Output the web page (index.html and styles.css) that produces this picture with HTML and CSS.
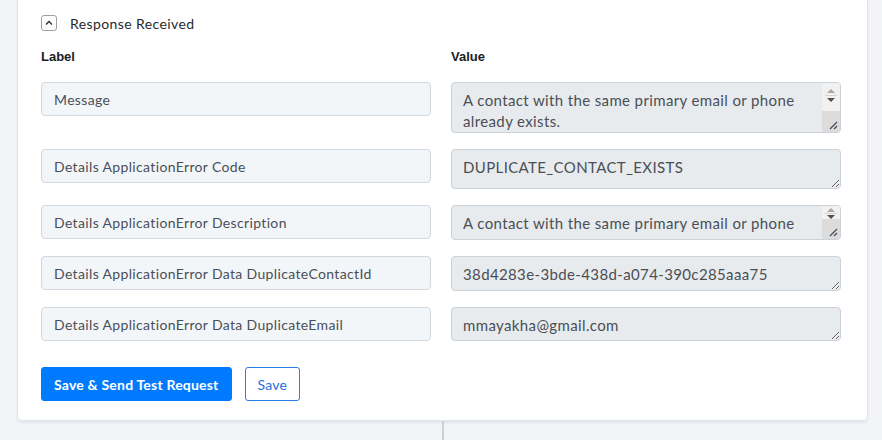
FILE: index.html
```html
<!DOCTYPE html>
<html lang="en">
<head>
    <meta charset="UTF-8">
    <meta name="viewport" content="width=device-width, initial-scale=1.0">
    <title>Response Received</title>
    <link rel="stylesheet" href="styles.css">
</head>
<body>

<!-- Carte de la réponse -->
<div class="card">
    <div class="card-head">
        <button class="toggle" type="button" aria-label="Collapse">
            <svg width="8" height="6" viewBox="0 0 8 6"><path d="M1 4.5 L4 1.5 L7 4.5" fill="none" stroke="#2b2f33" stroke-width="1.4"/></svg>
        </button>
        <span class="card-title">Response Received</span>
    </div>

    <div class="grid">
        <div class="col-title">Label</div>
        <div class="col-title">Value</div>

        <input class="field" type="text" value="Message" readonly>
        <div class="value-wrap">
            <textarea class="value scrolled h51" readonly>A contact with the same primary email or phone already exists.</textarea>
            <div class="scrollbar">
                <div class="track tall">
                    <span class="arrow up"></span>
                    <span class="sep"></span>
                    <span class="arrow down"></span>
                </div>
                <div class="corner">
                    <svg width="10" height="10" viewBox="0 0 10 10"><path d="M2 9 L9 2 M6 9 L9 6" stroke="#4b4f54" stroke-width="1.3"/></svg>
                </div>
            </div>
        </div>

        <input class="field" type="text" value="Details ApplicationError Code" readonly>
        <textarea class="value h40" readonly>DUPLICATE_CONTACT_EXISTS</textarea>

        <input class="field" type="text" value="Details ApplicationError Description" readonly>
        <div class="value-wrap">
            <textarea class="value scrolled h35" readonly>A contact with the same primary email or phone already exists.</textarea>
            <div class="scrollbar">
                <div class="track short">
                    <span class="arrow up"></span>
                    <span class="sep"></span>
                    <span class="arrow down"></span>
                </div>
                <div class="corner">
                    <svg width="10" height="10" viewBox="0 0 10 10"><path d="M2 9 L9 2 M6 9 L9 6" stroke="#4b4f54" stroke-width="1.3"/></svg>
                </div>
            </div>
        </div>

        <input class="field" type="text" value="Details ApplicationError Data DuplicateContactId" readonly>
        <textarea class="value h35" readonly>38d4283e-3bde-438d-a074-390c285aaa75</textarea>

        <input class="field" type="text" value="Details ApplicationError Data DuplicateEmail" readonly>
        <textarea class="value h34" readonly>mmayakha@gmail.com</textarea>
    </div>

    <div class="actions">
        <button class="btn btn-primary" type="button">Save &amp; Send Test Request</button>
        <button class="btn btn-outline" type="button">Save</button>
    </div>
</div>

<!-- Connecteur vers l'étape suivante -->
<div class="connector"></div>

</body>
</html>
```

FILE: styles.css
```css
body {
    margin: 0;
    padding: 0;
    background: #f2f4f7;
    font-family: 'Lato', 'Open Sans', sans-serif;
    color: #3d4248;
    overflow: hidden;
}

.card {
    width: 800px;
    margin-left: 17px;
    padding: 15px 26px 19px 23px;
    background: #ffffff;
    border: 1px solid #dfe4ee;
    border-top: none;
    border-radius: 0 0 5px 5px;
    box-shadow: 0 2px 3px rgba(40, 60, 100, 0.08);
}

.card-head {
    display: flex;
    align-items: center;
    gap: 13px;
    height: 16px;
}
.toggle {
    width: 16px;
    height: 16px;
    padding: 0;
    display: flex;
    align-items: center;
    justify-content: center;
    background: #ffffff;
    border: 1px solid #9aa0a8;
    border-radius: 3px;
}
.card-title {
    font-size: 14px;
    letter-spacing: 0.4px;
    color: #262a2e;
}

.grid {
    display: grid;
    grid-template-columns: 1fr 1fr;
    column-gap: 20px;
    row-gap: 16px;
    align-items: start;
    margin-top: 17px;
}
.col-title {
    font-family: 'Liberation Sans', Arial, sans-serif;
    font-weight: bold;
    font-size: 13px;
    line-height: 18px;
    color: #1d2125;
}

.field {
    box-sizing: border-box;
    height: 34px;
    width: 100%;
    margin: 0;
    padding: 0 12px;
    font-family: 'Lato', sans-serif;
    font-size: 14px;
    letter-spacing: 0.35px;
    color: #4a4f56;
    background: #f3f6f9;
    border: 1px solid #d3d8de;
    border-radius: 4px;
    outline: none;
}

.value {
    box-sizing: border-box;
    display: block;
    width: 100%;
    margin: 0;
    padding: 7px 12px 3px 11px;
    font-family: 'Lato', sans-serif;
    font-size: 15px;
    letter-spacing: 0.37px;
    line-height: 21px;
    color: #4a4f56;
    background: #e8ebee;
    border: 1px solid #cdd2d8;
    border-radius: 4px;
    resize: vertical;
    outline: none;
}
.value.scrolled {
    resize: none;
    overflow: hidden;
    padding-right: 28px;
}
.h51 { height: 51px; }
.h40 { height: 40px; }
.h35 { height: 35px; }
.h34 { height: 34px; }

/* Barre de défilement dessinée par-dessus la zone de texte */
.value-wrap {
    position: relative;
}
.scrollbar {
    position: absolute;
    top: 1px;
    right: 1px;
    bottom: 1px;
    width: 18px;
    display: flex;
    flex-direction: column;
    border-radius: 0 3px 3px 0;
    overflow: hidden;
}
.track {
    flex: 1;
    display: flex;
    flex-direction: column;
    align-items: center;
    background: #f1f1f1;
}
.track.tall { padding-top: 6px; gap: 2px; }
.track.short { padding-top: 2px; gap: 1px; }
.arrow {
    width: 0;
    height: 0;
    border-left: 4px solid transparent;
    border-right: 4px solid transparent;
}
.arrow.up { border-bottom: 4px solid #a8a8a8; }
.arrow.down { border-top: 4px solid #505050; }
.sep {
    width: 12px;
    height: 1px;
    background: #d2d2d2;
}
.corner {
    height: 21px;
    display: flex;
    align-items: flex-end;
    justify-content: flex-end;
    padding: 0 2px 2px 0;
    box-sizing: border-box;
    background: #dcdcdc;
}

.actions {
    display: flex;
    gap: 13px;
    margin-top: 26px;
}
.btn {
    height: 34px;
    padding: 0 12px;
    font-family: 'Lato', sans-serif;
    font-size: 14px;
    font-weight: bold;
    letter-spacing: 0.2px;
    border-radius: 3px;
    cursor: pointer;
}
.btn-primary {
    background: #007bff;
    color: #ffffff;
    border: 1px solid #007bff;
}
.btn-outline {
    background: #ffffff;
    color: #1f6fe0;
    border: 1px solid #2b7de9;
    font-weight: normal;
}

.connector {
    width: 2px;
    height: 40px;
    margin-left: 442px;
    background: #cdd0d5;
}
```
